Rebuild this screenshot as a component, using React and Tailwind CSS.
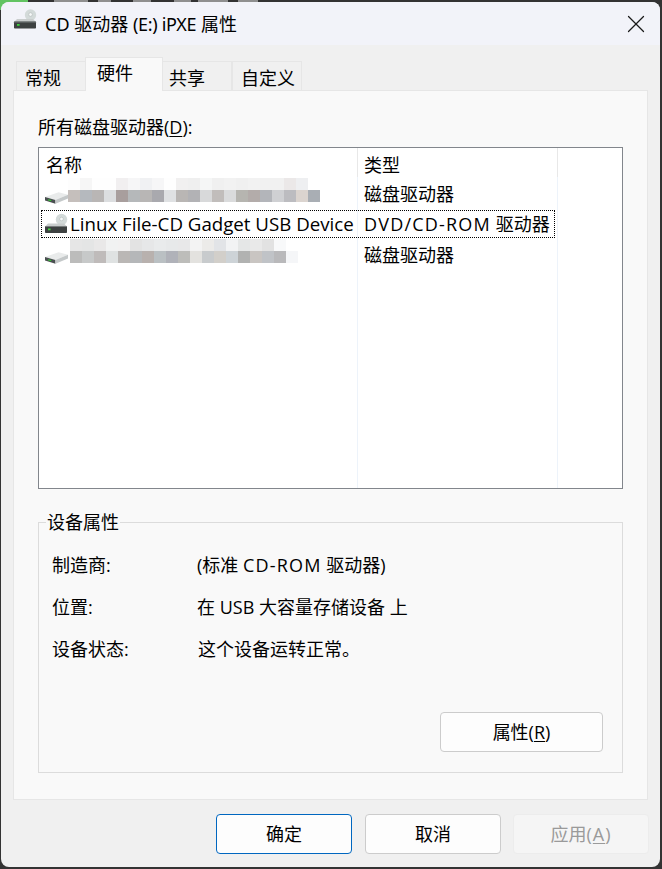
import React from 'react';
import { X } from 'lucide-react';

const FONT = 'font-["Open_Sans","Noto_Sans_CJK_SC",sans-serif]';

const blurRow1 = [
  ['#fdfdfd', '#f6f6f6', '#fefefe', '#fefefe', '#f1eff0', '#f6f6f7', '#f0f1f3', '#f6f6f7', '#fefefe', '#f1f0f0', '#efefef', '#f5f6f6', '#f0f0f0', '#f2f2f2', '#f0f0f0', '#f2f2f2', '#f1f1f1', '#f1f1f1', '#ebe8e8', '#eeeff1'],
  ['#c5bfbc', '#b5b9be', '#b9b6b5', '#dcdee0', '#a89e9d', '#b5b8ba', '#b8b6b5', '#a9a9ae', '#dfe1e3', '#b9b6b4', '#b2b2b5', '#d8d9da', '#c1bdbb', '#dadbdc', '#b6b5b0', '#b3acaa', '#b3b5ba', '#cfd0d3', '#bcbcc0', '#dbd4cf', '#a9aeb4'],
];

const blurRow3 = [
  ['#e6e6e6', '#e4e5e5', '#e9e8e8', '#f1f2f2', '#f2f1f1', '#e3e3e3', '#e6e7e8', '#e9ebec', '#e7e9ea', '#e8e8e9', '#f3f3f3', '#ecebe9', '#e2e4e7', '#f2f3f4', '#e5e7e7', '#e9e9e9', '#e2e2e2', '#f8f9fa'],
  ['#bcbcbb', '#c7c9c9', '#bfbbba', '#dfe2e2', '#bab7b5', '#b5b7b9', '#b8b1ae', '#bac0c3', '#b0b2b9', '#bdbdba', '#e3e2df', '#c8cbcd', '#d2cfca', '#cdd3d7', '#b1b2b1', '#c9c5c2', '#c0c3c7', '#b9b9bb', '#f5f6f8'],
];

// bits of the window behind, showing over the top edge: [gap, width]
const behind = [[53, 34], [10, 13], [22, 18], [23, 17], [7, 30], [10, 20]];

function CdIcon({ className }) {
  return (
    <svg viewBox="0 0 24 20" className={className}>
      <ellipse cx="17.5" cy="6" rx="5.7" ry="5.7" fill="#d3dad9" />
      <ellipse cx="17.5" cy="5.5" rx="1.8" ry="1.8" fill="#f6f8f8" stroke="#aab2b2" strokeWidth="0.5" />
      <path d="M1.5 12.5 4 10h16l2.5 2.5z" fill="#c9cdcd" />
      <rect x="1" y="12.5" width="22" height="7" rx="0.8" fill="#3d4141" />
      <rect x="1" y="12.5" width="22" height="1" fill="#777c7c" />
      <rect x="4" y="15" width="2.6" height="1.8" fill="#3fd13f" />
    </svg>
  );
}

function DiskIcon({ className }) {
  return (
    <svg viewBox="0 0 22 11" className={className}>
      <path d="M0 4.5 13 0l9 2.5-12 5z" fill="#e9ebeb" />
      <path d="M0 4.5 10 7.5V11L0 8z" fill="#4a4f50" />
      <path d="M10 7.5 22 2.5V6L10 11z" fill="#c4c8c9" />
      <path d="M3 6.6 6 7.5v1.2L3 7.8z" fill="#35c335" />
    </svg>
  );
}

function Mosaic({ rows, className }) {
  return (
    <div className={`flex flex-col ${className}`}>
      {rows.map((cells, i) => (
        <div key={i} className="flex h-3">
          {cells.map((c, j) => (
            <div key={j} className="h-3 w-3" style={{ backgroundColor: c }} />
          ))}
        </div>
      ))}
    </div>
  );
}

function Tab({ label, active, className }) {
  return (
    <div
      className={`flex items-center border border-b-0 border-[#e6e6e6] ${
        active ? 'z-10 -mx-px -mb-px h-[34px] bg-[#f9f9f9] pb-1' : 'mt-1 h-[29px] bg-[#f0f0f0] pt-1'
      } ${className}`}
    >
      {label}
    </div>
  );
}

function Btn({ children, primary, disabled, className }) {
  let tone = 'border-[#cccccc] text-black bg-[#fdfdfd]';
  if (primary) tone = 'border-[#0067c0] text-black bg-[#fdfdfd]';
  if (disabled) tone = 'border-[#ececec] text-[#9a9a9a] bg-[#f5f5f5]';
  return (
    <button className={`flex h-10 items-center justify-center rounded-[4px] border ${tone} ${className}`}>
      {children}
    </button>
  );
}

function Prop({ label, children, valueClass }) {
  return (
    <div className="flex h-[42px] items-center pl-[13px]">
      <div className="w-[145px]">{label}</div>
      <div className={valueClass}>{children}</div>
    </div>
  );
}

export default function App() {
  return (
    <div className={`relative h-[869px] w-[662px] overflow-hidden bg-[#333333] pr-[2px] pb-[2px] pl-px text-[18px] leading-[24px] text-black ${FONT}`}>
      {/* desktop showing behind the rounded corner */}
      <div className="absolute top-0 left-0 h-[10px] w-[28px] bg-[#62c462]" />
      <div className="flex h-[2px]">
        {behind.map(([gap, w], i) => (
          <div key={i} className="h-[2px] bg-[#8f8f8f]" style={{ marginLeft: gap, width: w }} />
        ))}
      </div>

      <div className="relative flex h-[865px] flex-col overflow-hidden rounded-[8px] bg-[#f0f0f0]">
        {/* title bar */}
        <div className="flex h-[43px] shrink-0 items-center bg-[#f2f3f9] pr-[9px] pl-[12px]">
          <CdIcon className="mr-[8px] mb-[9px] h-[20px] w-[24px]" />
          <div className='flex-1 pt-[1px] font-["Noto_Sans","Noto_Sans_CJK_SC",sans-serif]'>
            CD 驱动器 <span className="tracking-[-0.3px]">(E:) iPXE</span> 属性
          </div>
          <X size={30} strokeWidth={1} className="text-[#1a1a1a]" />
        </div>

        {/* tabs */}
        <div className="flex h-[45px] shrink-0 items-end pl-[15px]">
          <div className="flex h-[33px] items-start">
            <Tab label="常规" className="w-[70px] pl-[8px]" />
            <Tab label="硬件" active className="w-[78px] pl-[11px]" />
            <Tab label="共享" className="w-[70px] pl-[6px]" />
            <Tab label="自定义" className="w-[70px] pl-[8px]" />
          </div>
        </div>

        {/* page */}
        <div className="mx-3 flex h-[710px] shrink-0 flex-col border border-[#e6e6e6] bg-[#f9f9f9] px-[24px]">
          <div className="mt-[24px] h-[32px]">
            所有磁盘驱动器(<span className="underline underline-offset-2">D</span>):
          </div>

          {/* device list */}
          <div className="flex h-[342px] flex-col border border-[#82868c] bg-white">
            <div className="flex h-[29px] shrink-0">
              <div className="h-full w-[319px] border-r border-[#e8e8e8] pt-[5px] pl-[7px]">名称</div>
              <div className="h-full w-[200px] border-r border-[#e8e8e8] pt-[5px] pl-[6px]">类型</div>
            </div>
            <div className="relative flex-1">
              <div className="absolute top-0 bottom-0 left-[318px] w-px bg-[#edf3fa]" />
              <div className="absolute top-0 bottom-0 left-[518px] w-px bg-[#edf3fa]" />

              <div className="relative flex h-[33px] items-center">
                <div className="flex w-[319px] items-end self-start pt-px pl-[6px]">
                  <DiskIcon className="-mb-[2px] h-[12px] w-[23px]" />
                  <Mosaic rows={blurRow1} />
                </div>
                <div className="pl-[6px]">磁盘驱动器</div>
              </div>

              <div className="relative ml-[2px] flex h-[28px] w-[514px] items-center border border-dotted border-black">
                <div className="flex w-[316px] items-center pl-[2px]">
                  <CdIcon className="mr-[2px] mb-[2px] h-[21px] w-[24px]" />
                  <span className="text-[18.7px] whitespace-nowrap">Linux File-CD Gadget USB Device</span>
                </div>
                <div className="pl-[6px] whitespace-nowrap">
                  <span className="tracking-[1.2px]">DVD/CD-ROM</span> 驱动器
                </div>
              </div>

              <div className="relative flex h-[34px] items-center">
                <div className="flex w-[319px] items-end self-start pt-px pl-[6px]">
                  <DiskIcon className="-mb-[1px] h-[12px] w-[23px]" />
                  <Mosaic rows={blurRow3} className="ml-[2px]" />
                </div>
                <div className="pl-[6px]">磁盘驱动器</div>
              </div>
            </div>
          </div>

          {/* device properties */}
          <fieldset className="mt-[21px] h-[263px] border border-[#dcdcdc]">
            <legend className="ml-[7px] px-px leading-[24px]">设备属性</legend>
            <div className="mt-[10px]">
              <Prop label="制造商:">
                (标准 <span className="tracking-[1.2px]">CD-ROM</span> 驱动器)
              </Prop>
              <Prop label="位置:">在 USB 大容量存储设备 上</Prop>
              <Prop label="设备状态:" valueClass="pl-px">这个设备运转正常。</Prop>
            </div>
            <div className="mt-[42px] flex justify-end pr-[19px]">
              <Btn className="w-[163px]">
                属性(<span className="underline underline-offset-2">R</span>)
              </Btn>
            </div>
          </fieldset>
        </div>

        {/* footer */}
        <div className="flex flex-1 items-start justify-end gap-3 pt-[14px] pr-[11px]">
          <Btn primary className="mr-px w-[136px]">确定</Btn>
          <Btn className="w-[136px]">取消</Btn>
          <Btn disabled className="w-[136px]">
            应用<span className="tracking-[1px]">(<span className="underline underline-offset-2">A</span>)</span>
          </Btn>
        </div>
      </div>
    </div>
  );
}
